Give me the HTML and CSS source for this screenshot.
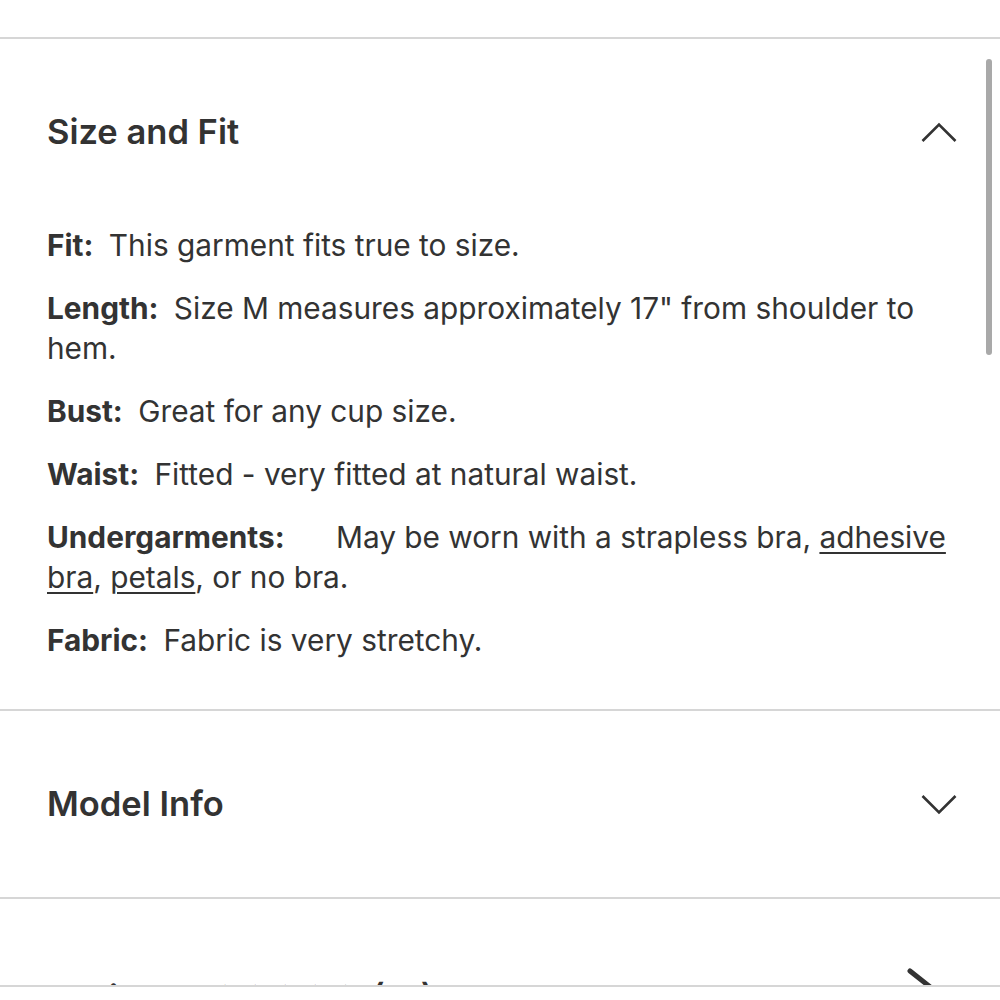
FILE: index.html
```html
<!DOCTYPE html>
<html lang="en">
<head>
<meta charset="utf-8">
<title>Size and Fit</title>
<link rel="stylesheet" href="styles.css">
</head>
<body>
<div class="viewport">
  <div class="page">
    <section class="acc open">
      <div class="acc-head">
        <h2 class="acc-title">Size and Fit</h2>
        <svg class="chev" width="36" height="21" viewBox="0 0 36 21"><polyline points="1.5,19 18,2.5 34.5,19" fill="none" stroke="#333" stroke-width="2.6"/></svg>
      </div>
      <div class="acc-body">
        <p class="row"><b class="label">Fit:</b> This garment fits true to size.</p>
        <p class="row"><b class="label">Length:</b> Size M measures approximately 17" from shoulder to hem.</p>
        <p class="row"><b class="label">Bust:</b> Great for any cup size.</p>
        <p class="row"><b class="label">Waist:</b> Fitted - very fitted at natural waist.</p>
        <p class="row"><b class="label label-wide">Undergarments:</b> May be worn with a strapless bra, <a class="link" href="#">adhesive bra</a>, <a class="link" href="#">petals</a>, or no bra.</p>
        <p class="row"><b class="label">Fabric:</b> Fabric is very stretchy.</p>
      </div>
    </section>
    <section class="acc">
      <div class="acc-head">
        <h2 class="acc-title">Model Info</h2>
        <svg class="chev" width="36" height="21" viewBox="0 0 36 21"><polyline points="1.5,2 18,18.5 34.5,2" fill="none" stroke="#333" stroke-width="2.6"/></svg>
      </div>
    </section>
    <section class="acc">
      <div class="acc-head acc-head-reviews">
        <h2 class="acc-title">Reviews <span class="stars">★★★★★</span> (12)</h2>
        <svg class="chev-right" width="32" height="44" viewBox="0 0 32 44"><polyline points="3,3 27,22 3,41" fill="none" stroke="#333" stroke-width="5" stroke-linecap="round" stroke-linejoin="round"/></svg>
      </div>
    </section>
  </div>
  <div class="scrollbar"></div>
</div>
<div class="bottom-bar"></div>
</body>
</html>
```

FILE: styles.css
```css
html, body {
  margin: 0;
  padding: 0;
  background: #fff;
}
body {
  font-family: "Inter", "Open Sans", sans-serif;
  color: #333;
}
.viewport {
  position: relative;
  height: 985px;
  overflow: hidden;
}
.page {
  padding-top: 37px;
}
.acc {
  border-top: 2px solid #d6d6d6;
  padding: 0 43px 0 47px;
}
.acc-head {
  height: 186px;
  display: flex;
  align-items: center;
  justify-content: space-between;
}
.acc-head-reviews {
  align-items: flex-start;
  padding-top: 76px;
  box-sizing: border-box;
}
.acc-title {
  margin: 0;
  font-size: 34.5px;
  font-weight: 600;
  line-height: 42px;
}
.chev {
  display: block;
  flex: none;
}
.chev-right {
  display: block;
  flex: none;
  margin-right: 18px;
  margin-top: -7px;
}
.stars {
  display: inline-block;
  margin-left: 18px;
  font-size: 24px;
  letter-spacing: 5px;
  vertical-align: 6px;
}
.acc-body {
  padding-bottom: 49px;
}
.row {
  margin: 0 0 23px;
  font-size: 29.8px;
  line-height: 40px;
}
.row:last-child {
  margin-bottom: 0;
}
.label {
  font-weight: 700;
  margin-right: 7px;
}
.label-wide {
  margin-right: 43px;
}
.link {
  color: #333;
  text-decoration: underline;
  text-decoration-thickness: 2px;
  text-underline-offset: 4px;
}
.scrollbar {
  position: absolute;
  left: 986px;
  top: 59px;
  width: 6px;
  height: 296px;
  border-radius: 3px;
  background: #a9a9a9;
}
.bottom-bar {
  height: 15px;
  border-top: 2px solid #d6d6d6;
  box-sizing: border-box;
}
```
